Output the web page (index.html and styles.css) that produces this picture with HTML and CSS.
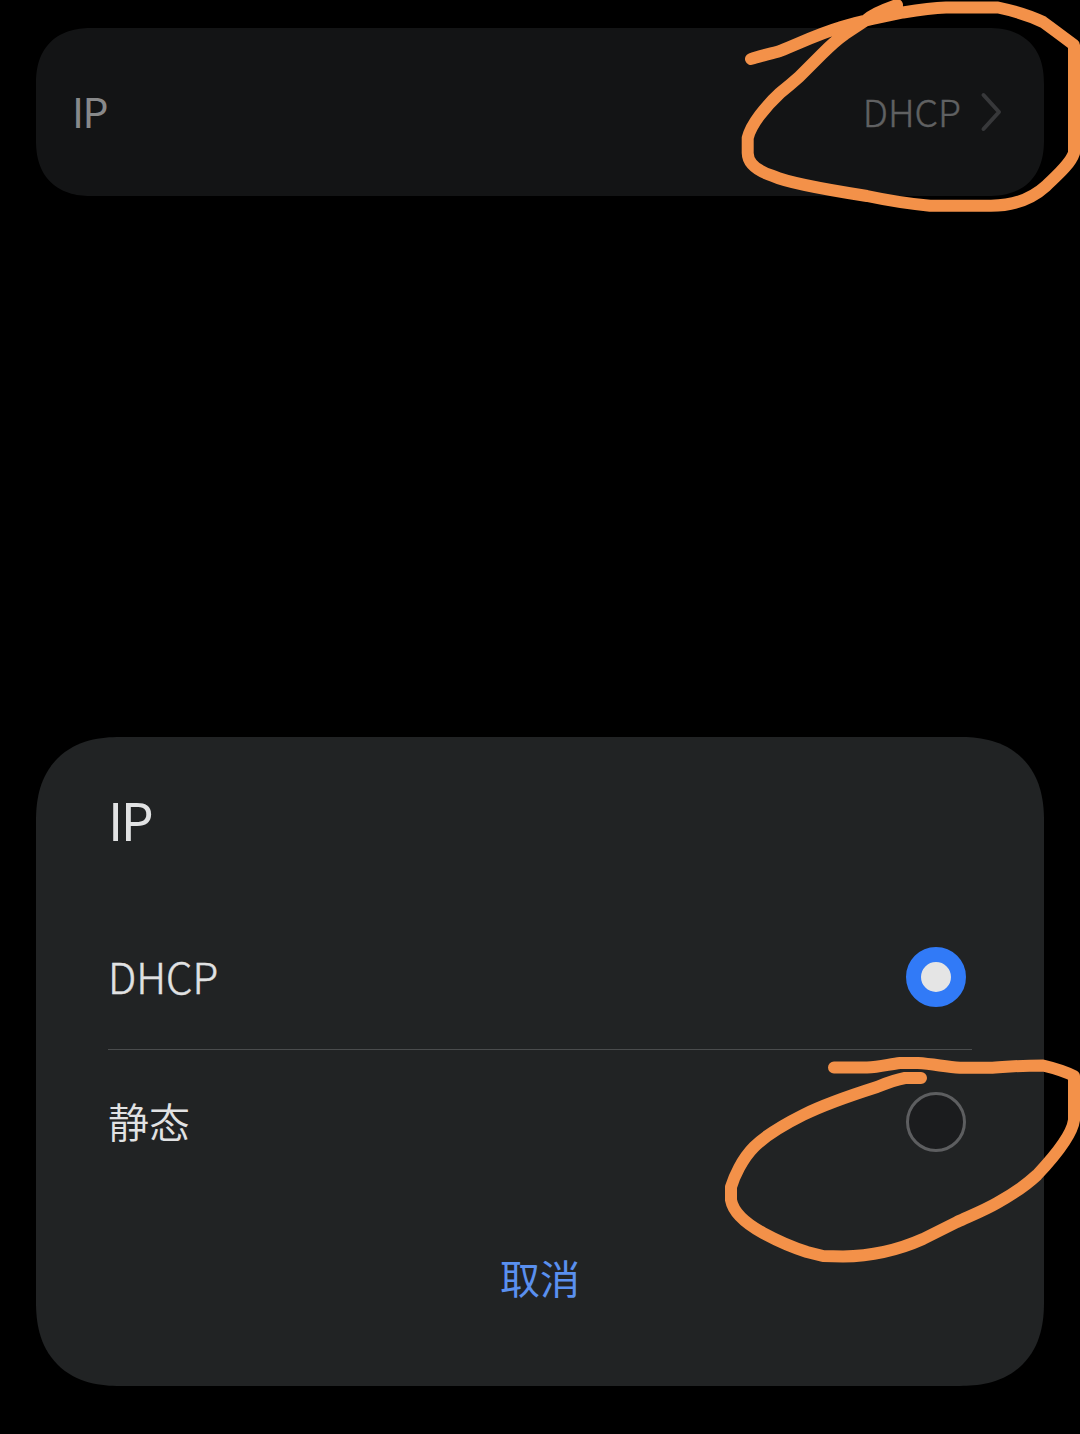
FILE: index.html
```html
<!DOCTYPE html>
<html lang="zh-CN">
<head>
<meta charset="utf-8">
<title>IP</title>
<link rel="stylesheet" href="styles.css">
</head>
<body>
<main class="screen">
  <section class="setting">
    <span class="setting-label">IP</span>
    <span class="setting-value">DHCP</span>
    <svg class="chevron" width="24" height="42" viewBox="0 0 24 42"><path d="M4.500 4 L20 21 L4.500 38"/></svg>
  </section>
  <section class="dialog">
    <h1 class="dialog-title">IP</h1>
    <div class="option">
      <span class="latin">DHCP</span>
      <span class="radio radio-on"></span>
    </div>
    <div class="option option-last">
      <span class="han">静态</span>
      <span class="radio"></span>
    </div>
    <button class="cancel">取消</button>
  </section>
  <svg class="marker" viewBox="0 0 1080 1434">
    <path d="M751 59 C759 56 770 54 780 51 C800 43 818 34 840 27.500 C850 24 860 22 870 19.500 L903 12.500 Q930 8 946 7.500 H998 Q1024 13 1043 22 Q1054 30 1074 45 V153 C1070 165 1055 177 1046 186 Q1024 206 990 205.700 H930 Q900 203 867 196 Q790 184 773 176 Q748 168 747.700 153 V138 C751 124 766 106 780 93 Q790 85 799 77 L822 54 Q835 41 845 34 L867 19.500 Q874 13 897 5"/>
    <path d="M834 1067.500 H867 C880 1067 890 1064 900 1063 H918 C934 1064 946 1067 960 1067.700 H990 C1005 1067 1015 1065.500 1043 1065.500 Q1062 1070 1074 1076 V1120 C1072 1136 1053 1158 1037 1175 Q1022 1189 997 1203 C985 1210 970 1216 957 1222 L923 1239 Q885 1256 843 1256.500 L823 1256 L807 1252 Q785 1245 763 1233 Q734 1217 731 1200 V1187 C734 1177 742 1159 754 1147 C764 1137 785 1124 803 1115 C825 1104 855 1094 877 1087 Q894 1080 905 1078 H921"/>
  </svg>
</main>
</body>
</html>
```
FILE: styles.css
```css
* { box-sizing: border-box; }
body {
  margin: 0;
  background: #000;
  font-family: "Noto Sans CJK SC", sans-serif;
}
.screen {
  position: relative;
  display: flex;
  flex-direction: column;
  justify-content: space-between;
  width: 1080px;
  height: 1434px;
  padding: 28px 36px 48px;
  overflow: hidden;
}
.setting {
  display: flex;
  align-items: center;
  height: 168px;
  padding: 0 41px 0 36px;
  border-radius: 56px;
  corner-shape: superellipse(1.23);
  background: #131415;
}
.setting-label {
  flex: 1;
  padding-bottom: 4px;
  color: #88898a;
  font-size: 41px;
  letter-spacing: -1.5px;
  line-height: 60px;
}
.setting-value {
  margin-right: 18px;
  padding-bottom: 3px;
  color: #606162;
  font-size: 37.5px;
  font-weight: 300;
  line-height: 60px;
  -webkit-text-stroke: 0.4px;
}
.chevron { fill: none; stroke: #37383a; stroke-width: 4; stroke-linecap: round; stroke-linejoin: round; }
.dialog {
  display: flex;
  flex-direction: column;
  height: 649px;
  padding: 46px 72px;
  border-radius: 84px;
  corner-shape: superellipse(1.23);
  background: #212324;
  color: #e1e2e3;
}
.dialog-title {
  margin: 0 0 51px;
  font-size: 52px;
  font-weight: 400;
  letter-spacing: -2.5px;
  line-height: 72px;
}
.option {
  display: flex;
  align-items: center;
  justify-content: space-between;
  height: 144px;
  padding: 0 6px 1px 0;
  border-bottom: 1px solid #4a4c4d;
  font-size: 41px;
}
.option-last { padding-bottom: 0; border-bottom: 0; }
.latin {
  padding-bottom: 3px;
  font-size: 42px;
  font-weight: 300;
  -webkit-text-stroke: 0.5px;
}
.han { padding-bottom: 4px; font-weight: 350; }
.radio {
  width: 60px;
  height: 60px;
  border: 3px solid #5d5e60;
  border-radius: 50%;
  background: #1b1c1e;
}
.radio-on { border: 15px solid #317af7; background: #e5e5e5; }
.cancel {
  align-self: center;
  margin-top: 53px;
  padding: 0;
  border: 0;
  background: none;
  color: #5a90ef;
  font: 400 40px/60px "Noto Sans CJK SC", sans-serif;
}
.marker {
  position: absolute;
  inset: 0;
  fill: none;
  stroke: #f39149;
  stroke-width: 12;
  stroke-linecap: round;
  stroke-linejoin: round;
}
```
